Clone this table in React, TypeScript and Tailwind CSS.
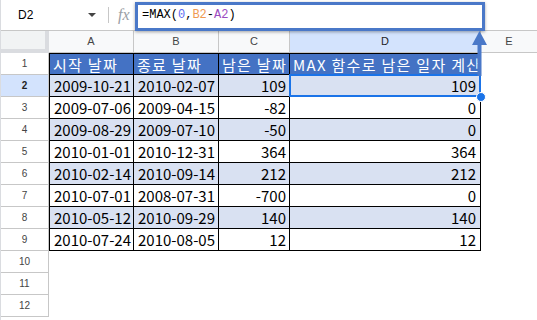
import React from "react";

const rows = [
  ["2009-10-21", "2010-02-07", "109", "109"],
  ["2009-07-06", "2009-04-15", "-82", "0"],
  ["2009-08-29", "2009-07-10", "-50", "0"],
  ["2010-01-01", "2010-12-31", "364", "364"],
  ["2010-02-14", "2010-09-14", "212", "212"],
  ["2010-07-01", "2008-07-31", "-700", "0"],
  ["2010-05-12", "2010-09-29", "140", "140"],
  ["2010-07-24", "2010-08-05", "12", "12"],
];

const ko = "font-['Noto_Sans_CJK_KR','Noto_Sans',sans-serif]";
const ui = "font-['Liberation_Sans',Arial,sans-serif]";

function RowHead({ n, active }: { n: number; active?: boolean }) {
  return (
    <div
      className={`h-[22px] flex items-center justify-center border-r border-b border-[#c7c7c7] text-[10px] ${ui} ${
        active ? "bg-[#d3e3fd] font-bold text-[#1f1f1f]" : "bg-white text-[#444]"
      }`}
    >
      {n}
    </div>
  );
}

export default function App() {
  return (
    <div className="relative w-[537px] h-[320px] overflow-hidden bg-white border-l border-[#dadce0]">
      {/* formula bar */}
      <div className={`h-[31px] flex items-center border-b border-[#c7c7c7] ${ui}`}>
        <div className="w-[87px] pl-[17px] text-[12px] text-black">D2</div>
        <div className="w-0 h-0 border-l-[4px] border-r-[4px] border-t-[4px] border-l-transparent border-r-transparent border-t-[#444]" />
        <div className="ml-[12px] w-px h-[16px] bg-[#c7c7c7]" />
        <div className="ml-[9px] w-[23px] text-[16px] italic text-[#9aa0a6] font-['Liberation_Serif',serif]">
          fx
        </div>
        <div className="ml-[1px] font-['Liberation_Mono',monospace] text-[12px] text-black">
          =MAX(<span className="text-[#5c6cf2]">0</span>,
          <span className="text-[#f09a52]">B2</span>-
          <span className="text-[#9b4bc0]">A2</span>)
        </div>
      </div>

      {/* grid */}
      <div className="grid grid-cols-[48px_85px_85px_71px_191px_57px]">
        {/* column headers */}
        <div className="h-[22px] bg-[#f1f3f4] border-r-[4px] border-b-[4px] border-[#dadce0]" />
        {["A", "B", "C", "D", "E"].map((c) => (
          <div
            key={c}
            className={`h-[22px] flex items-center justify-center border-r border-b border-[#c7c7c7] text-[11px] ${ui} ${
              c === "D" ? "bg-[#d3e3fd] text-[#1f1f1f]" : "bg-[#f8f9fa] text-[#444]"
            }`}
          >
            {c}
          </div>
        ))}

        {/* row 1 header */}
        <RowHead n={1} />
        {["시작 날짜", "종료 날짜", "남은 날짜", "MAX 함수로 남은 일자 계산"].map((t, i) => (
          <div
            key={t}
            className={`h-[22px] flex items-center whitespace-nowrap overflow-hidden bg-[#4472c4] text-white text-[15px] tracking-[1.3px] leading-none border-t border-b border-r border-black ${ko} ${
              i === 0 ? "border-l pl-[3px]" : "pl-[3px]"
            }`}
          >
            {t}
          </div>
        ))}
        <div className="h-[22px]" />

        {rows.map((r, idx) => {
          const alt = idx % 2 === 0;
          const bg = alt ? "bg-[#d9e1f2]" : "bg-white";
          const cell = `h-[22px] flex items-center text-[15px] leading-none text-black border-r border-b border-black ${ko} ${bg}`;
          return (
            <React.Fragment key={idx}>
              <RowHead n={idx + 2} active={idx === 0} />
              <div className={`${cell} border-l pl-[4px]`}>{r[0]}</div>
              <div className={`${cell} pl-[4px]`}>{r[1]}</div>
              <div className={`${cell} justify-end pr-[3px]`}>{r[2]}</div>
              <div className={`${cell} justify-end pr-[4px] relative`}>
                {r[3]}
                {idx === 0 && (
                  <>
                    <div className="absolute -left-px -top-px w-[192px] h-[23px] border-2 border-[#1a73e8]" />
                    <div className="absolute -right-[6px] -bottom-[6px] w-[10px] h-[10px] rounded-full bg-[#1a73e8] border border-white z-10" />
                  </>
                )}
              </div>
              <div className="h-[22px]" />
            </React.Fragment>
          );
        })}

        {[10, 11, 12].map((n) => (
          <React.Fragment key={n}>
            <RowHead n={n} />
            <div className="h-[22px] col-span-5" />
          </React.Fragment>
        ))}
      </div>

      {/* highlight annotation over the formula */}
      <div className="absolute left-[134px] top-[2px] w-[350px] h-[29px] border-[3px] border-[#4a78c8] shadow-[0_1px_3px_rgba(0,0,0,0.35)]" />
      <svg
        className="absolute left-[470px] top-[30px]"
        width="17"
        height="46"
        viewBox="0 0 17 46"
      >
        <polygon points="8.5,1 1,15 16,15" fill="#4a78c8" />
        <rect x="6.5" y="14" width="4" height="32" fill="#4a78c8" />
      </svg>
    </div>
  );
}
